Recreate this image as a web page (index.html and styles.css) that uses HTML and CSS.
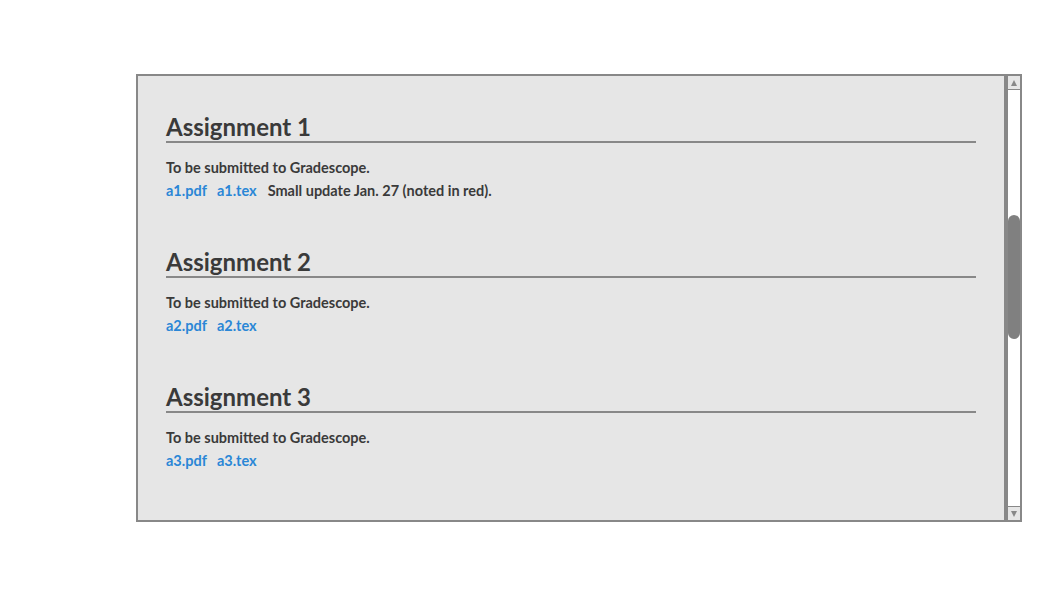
FILE: index.html
```html
<!DOCTYPE html>
<html>
<head>
<meta charset="utf-8">
<link rel="stylesheet" href="styles.css">
</head>
<body>
<div class="frame">
  <div class="content">
    <section class="assignment">
      <h2 class="title">Assignment 1</h2>
      <p class="line">To be submitted to Gradescope.</p>
      <p class="line"><a class="link" href="#">a1.pdf</a><a class="link" href="#">a1.tex</a><span class="note">Small update Jan. 27 (noted in red).</span></p>
    </section>
    <section class="assignment">
      <h2 class="title">Assignment 2</h2>
      <p class="line">To be submitted to Gradescope.</p>
      <p class="line"><a class="link" href="#">a2.pdf</a><a class="link" href="#">a2.tex</a></p>
    </section>
    <section class="assignment">
      <h2 class="title">Assignment 3</h2>
      <p class="line">To be submitted to Gradescope.</p>
      <p class="line"><a class="link" href="#">a3.pdf</a><a class="link" href="#">a3.tex</a></p>
    </section>
  </div>
  <div class="divider"></div>
  <div class="scrollbar">
    <div class="sb-btn"><span class="arrow-up"></span></div>
    <div class="sb-track"><div class="sb-thumb"></div></div>
    <div class="sb-btn sb-btn-bottom"><span class="arrow-down"></span></div>
  </div>
</div>
</body>
</html>
```
FILE: styles.css
```css
html, body {
  margin: 0;
  padding: 0;
  background: #ffffff;
}
body {
  font-family: Lato, "Open Sans", sans-serif;
  color: #383838;
}
.frame {
  margin: 74px 0 0 136px;
  width: 886px;
  height: 448px;
  box-sizing: border-box;
  border: 2px solid #888888;
  display: flex;
  background: #e6e6e6;
}
.content {
  flex: 1;
  padding: 39px 28px 0 28px;
  overflow: hidden;
}
.assignment {
  margin-bottom: 47px;
}
.assignment + .assignment {
  padding-top: 1px;
}
.title {
  margin: 0;
  font-size: 24px;
  line-height: 24px;
  font-weight: 700;
  color: #3a3a3a;
  border-bottom: 2px solid #888888;
  padding-bottom: 2px;
}
.line {
  margin: 0;
  font-size: 14.5px;
  line-height: 23px;
  font-weight: 700;
  color: #3a3a3a;
}
.title + .line {
  margin-top: 13px;
}
.link {
  color: #2a86d6;
  text-decoration: none;
  margin-right: 10px;
}
.note {
  margin-left: 1px;
}
.divider {
  width: 4px;
  background: #888888;
}
.scrollbar {
  width: 12px;
  display: flex;
  flex-direction: column;
  background: #ffffff;
}
.sb-btn {
  height: 13px;
  background: #e6e6e6;
  border-bottom: 1px solid #888888;
  display: flex;
  align-items: center;
  justify-content: center;
}
.sb-btn-bottom {
  border-bottom: none;
  border-top: 1px solid #888888;
}
.arrow-up {
  width: 0;
  height: 0;
  border-left: 3px solid transparent;
  border-right: 3px solid transparent;
  border-bottom: 6px solid #888888;
}
.arrow-down {
  width: 0;
  height: 0;
  border-left: 3px solid transparent;
  border-right: 3px solid transparent;
  border-top: 6px solid #888888;
}
.sb-track {
  flex: 1;
  background: #ffffff;
}
.sb-thumb {
  margin-top: 125px;
  height: 124px;
  border-radius: 6px;
  background: #808080;
}
```
